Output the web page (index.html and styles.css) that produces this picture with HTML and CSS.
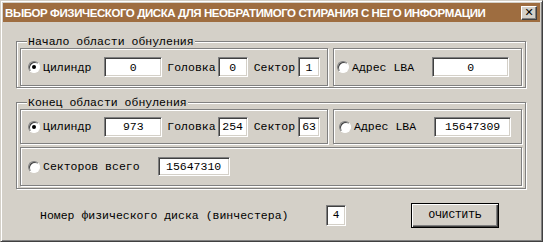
FILE: index.html
```html
<!doctype html>
<html lang="ru">

<head>
	<meta charset="UTF-8">
	<title>Выбор физического диска</title>
	<link rel="stylesheet" href="styles.css">
</head>

<body>
	<div class="window">
		<div class="titlebar">
			<span class="title">ВЫБОР ФИЗИЧЕСКОГО ДИСКА ДЛЯ НЕОБРАТИМОГО СТИРАНИЯ С НЕГО ИНФОРМАЦИИ</span>
			<span class="close">&#x2715;</span>
		</div>
		<div class="client">
			<div class="group first">
				<div class="legend">Начало области обнуления</div>
				<div class="row">
					<div class="box chs">
						<span class="radio checked"></span>
						<span class="lbl cyl">Цилиндр</span>
						<input class="field cyl-in" type="text" value="0" readonly>
						<span class="lbl head">Головка</span>
						<input class="field head-in" type="text" value="0" readonly>
						<span class="lbl sec">Сектор</span>
						<input class="field sec-in" type="text" value="1" readonly>
					</div>
					<div class="box lba">
						<span class="radio"></span>
						<span class="lbl">Адрес LBA</span>
						<input class="field lba-in" type="text" value="0" readonly>
					</div>
				</div>
			</div>
			<div class="group second">
				<div class="legend">Конец области обнуления</div>
				<div class="row">
					<div class="box chs">
						<span class="radio checked"></span>
						<span class="lbl cyl">Цилиндр</span>
						<input class="field cyl-in" type="text" value="973" readonly>
						<span class="lbl head">Головка</span>
						<input class="field head-in" type="text" value="254" readonly>
						<span class="lbl sec">Сектор</span>
						<input class="field sec-in" type="text" value="63" readonly>
					</div>
					<div class="box lba">
						<span class="radio"></span>
						<span class="lbl">Адрес LBA</span>
						<input class="field lba-in" type="text" value="15647309" readonly>
					</div>
				</div>
				<div class="box total">
					<span class="radio"></span>
					<span class="lbl">Секторов всего</span>
					<input class="field total-in" type="text" value="15647310" readonly>
				</div>
			</div>
			<div class="footer">
				<span class="lbl disk">Номер физического диска (винчестера)</span>
				<input class="field disk-in" type="text" value="4" readonly>
				<button class="btn" type="button">ОЧИСТИТЬ</button>
			</div>
		</div>
	</div>
</body>

</html>
```

FILE: styles.css
```css
html,
body {
	margin: 0;
	padding: 0;
	background: #d4d0c8;
}

.window {
	box-sizing: border-box;
	width: 543px;
	height: 242px;
	padding: 2px;
	background: #d4d0c8;
	border: 1px solid;
	border-color: #d4d0c8 #404040 #404040 #d4d0c8;
	box-shadow: inset 1px 1px 0 #fff, inset -1px -1px 0 #808080;
	font-family: "Liberation Mono", "Courier New", monospace;
	font-size: 11.5px;
	color: #000;
}

.titlebar {
	height: 19px;
	display: flex;
	align-items: center;
	justify-content: space-between;
	padding: 0 3px 0 2px;
	background: #9e6d40;
}

.title {
	font-family: "Liberation Sans", Arial, sans-serif;
	font-weight: bold;
	font-size: 11.5px;
	letter-spacing: -0.42px;
	color: #fff;
	white-space: nowrap;
}

.close {
	box-sizing: border-box;
	width: 16px;
	height: 14px;
	display: flex;
	align-items: center;
	justify-content: center;
	background: #d4d0c8;
	border: 1px solid;
	border-color: #fff #404040 #404040 #fff;
	box-shadow: inset -1px -1px 0 #808080;
	font-family: "DejaVu Sans", sans-serif;
	font-size: 11px;
	font-weight: bold;
	color: #000;
}

.client {
	padding: 19px 14px 0 13px;
}

.group {
	border: 1px solid #808080;
	box-shadow: inset 1px 1px 0 #fff, 1px 1px 0 #fff;
	padding: 0 3px 1px 3px;
}

.group.second {
	margin-top: 14px;
	padding-bottom: 2px;
}

.legend {
	width: fit-content;
	margin: -7px 0 -1px 7px;
	padding: 0 1px;
	line-height: 14px;
	background: #d4d0c8;
	white-space: nowrap;
}

.row {
	display: flex;
	gap: 5px;
}

.box {
	box-sizing: border-box;
	display: flex;
	align-items: center;
	height: 38px;
	padding-left: 7px;
	border: 1px solid #808080;
	box-shadow: inset 1px 1px 0 #fff, 1px 1px 0 #fff;
}

.second .box {
	height: 35px;
}

.box.chs {
	width: 308px;
}

.box.lba {
	flex: 1;
	padding-left: 3px;
}

.second .box.lba {
	padding-left: 5px;
}

.second .box.total {
	height: 39px;
	margin-top: 3px;
}

.radio {
	box-sizing: border-box;
	position: relative;
	flex: none;
	width: 12px;
	height: 12px;
	border-radius: 50%;
	background: #fff;
	border: 1px solid;
	border-color: #808080 #fff #fff #808080;
	box-shadow: inset 1px 1px 0 #404040;
}

.radio.checked::after {
	content: "";
	position: absolute;
	left: 3px;
	top: 3px;
	width: 4px;
	height: 4px;
	border-radius: 50%;
	background: #000;
}

.lbl {
	white-space: nowrap;
	margin-left: 3px;
}

.field {
	box-sizing: border-box;
	height: 20px;
	margin: 0;
	padding: 0;
	border: 1px solid;
	border-color: #808080 #fff #fff #808080;
	box-shadow: inset 1px 1px 0 #404040, inset -1px -1px 0 #d4d0c8;
	background: #fff;
	font-family: "Liberation Mono", "Courier New", monospace;
	font-size: 11.5px;
	color: #000;
	text-align: center;
	outline: none;
}

.cyl-in {
	width: 58px;
	margin-left: 13px;
}

.lbl.head {
	margin-left: 5px;
}

.head-in {
	width: 30px;
	margin-left: 2px;
}

.lbl.sec {
	margin-left: 6px;
}

.sec-in {
	width: 22px;
	margin-left: 3px;
}

.lba-in {
	width: 77px;
	margin-left: 18px;
}

.total-in {
	width: 72px;
	height: 19px;
	margin-left: 18px;
}

.footer {
	display: flex;
	align-items: center;
	height: 26px;
	margin-top: 13px;
}

.lbl.disk {
	width: 286px;
	margin-left: 24px;
	font-size: 11.5px;
}

.disk-in {
	width: 20px;
	height: 21px;
	font-size: 11px;
}

.btn {
	box-sizing: border-box;
	width: 88px;
	height: 25px;
	margin-left: 65px;
	padding: 0;
	background: #d4d0c8;
	border: 1px solid #000;
	box-shadow: inset 1px 1px 0 #fff, inset -1px -1px 0 #404040, inset -2px -2px 0 #808080;
	font-family: "Liberation Mono", "Courier New", monospace;
	font-size: 11px;
	color: #000;
}
```
